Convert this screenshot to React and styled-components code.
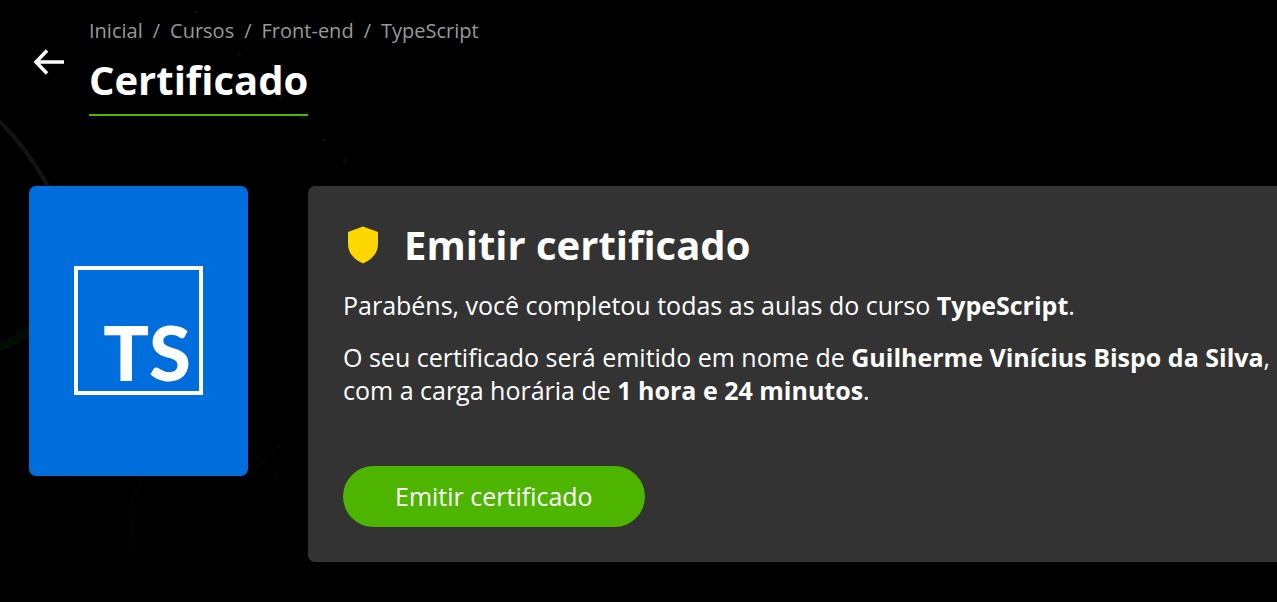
import React from 'react';
import styled, { createGlobalStyle } from 'styled-components';

const GlobalStyle = createGlobalStyle`
  *, *::before, *::after { box-sizing: border-box; }
  body {
    margin: 0;
    background: #000;
    color: #fff;
    font-family: "Open Sans", sans-serif;
  }
  h1, h2, p, ol { margin: 0; padding: 0; }
`;

const Page = styled.div`
  position: relative;
  min-height: 100vh;
  overflow: hidden;
`;

const Backdrop = styled.svg`
  position: absolute;
  top: 0;
  left: 0;
  z-index: -1;
  pointer-events: none;
`;

const Header = styled.header`
  display: flex;
  align-items: flex-start;
  gap: 24px;
  padding: 16px 32px 0;
`;

const BackLink = styled.a`
  display: flex;
  padding-top: 32px;
  color: #fff;
`;

const Crumbs = styled.ol`
  display: flex;
  list-style: none;
  font-size: 20px;
  line-height: 30px;
  color: #999;
`;

const Crumb = styled.li`
  & + &::before {
    content: "/";
    margin: 0 10px;
  }
`;

const CrumbLink = styled.a`
  color: inherit;
  text-decoration: none;
`;

const Title = styled.h1`
  width: fit-content;
  border-bottom: 2px solid #4db500;
  font-size: 40px;
  line-height: 68px;
  font-weight: 700;
`;

const Content = styled.main`
  display: flex;
  align-items: flex-start;
  gap: 60px;
  padding: 70px 0 40px 29px;
`;

const CourseCover = styled.div`
  flex: none;
  display: flex;
  align-items: center;
  justify-content: center;
  width: 219px;
  height: 290px;
  padding-bottom: 2px;
  border-radius: 7px;
  background: #006ddd;
`;

const CourseLogo = styled.div`
  display: flex;
  align-items: flex-end;
  justify-content: flex-end;
  width: 129px;
  height: 129px;
  padding: 0 8px 1px;
  border: 4px solid #fff;
  font-family: Lato, sans-serif;
  font-size: 76px;
  line-height: 76px;
  font-weight: 900;
`;

const Card = styled.section`
  flex: 1;
  min-width: 0;
  padding: 35px 0 35px 35px;
  border-radius: 7px 0 0 7px;
  background: #333;
`;

const CardHeader = styled.div`
  display: flex;
  align-items: center;
  gap: 25px;
  margin-bottom: 20px;
  padding-left: 4px;
`;

const CardTitle = styled.h2`
  font-size: 40px;
  line-height: 48px;
  font-weight: 700;
`;

const Text = styled.p`
  margin-bottom: 19px;
  font-size: 25px;
  line-height: 33px;
`;

const IssueButton = styled.button`
  display: block;
  margin-top: 59px;
  padding: 14px 52px;
  border: 0;
  border-radius: 32px;
  background: #4db500;
  color: #fff;
  font: inherit;
  font-size: 25px;
  line-height: 33px;
  cursor: pointer;
`;

const crumbs = ['Inicial', 'Cursos', 'Front-end', 'TypeScript'];

const dots = [[196, 12], [239, 54], [281, 97], [302, 118], [324, 140], [345, 161]];

function BackgroundArt() {
  return (
    <Backdrop width="400" height="602" viewBox="0 0 400 602" fill="none" aria-hidden="true">
      <path d="M-4 118Q26 146 49 188" stroke="#131313" strokeWidth="4" />
      <path d="M-4 348Q16 342 32 328" stroke="#020c02" strokeWidth="9" />
      <path d="M66 474Q70 520 79 557" stroke="#020202" strokeWidth="3" />
      <path d="M142 474Q125 515 134 557" stroke="#010201" strokeWidth="8" />
      <path d="M247 445L279 478M279 445L247 478" stroke="#050403" strokeWidth="3" />
      {dots.map(([x, y]) => (
        <circle key={x} cx={x} cy={y} r="2" fill="#0c0c0c" />
      ))}
    </Backdrop>
  );
}

export default function App() {
  return (
    <Page>
      <GlobalStyle />
      <BackgroundArt />
      <Header>
        <BackLink href="#" aria-label="Voltar">
          <svg width="33" height="28" viewBox="0 0 33 28" fill="none" stroke="currentColor" strokeWidth="3.500">
            <path d="M32 14H4M15 2.500L4 14L15 25.500" />
          </svg>
        </BackLink>
        <div>
          <nav aria-label="Trilha">
            <Crumbs>
              {crumbs.map((name) => (
                <Crumb key={name}>
                  <CrumbLink href="#">{name}</CrumbLink>
                </Crumb>
              ))}
            </Crumbs>
          </nav>
          <Title>Certificado</Title>
        </div>
      </Header>
      <Content>
        <CourseCover>
          <CourseLogo>TS</CourseLogo>
        </CourseCover>
        <Card>
          <CardHeader>
            <svg width="32" height="38" viewBox="0 0 32 38" fill="#ffd700" aria-hidden="true">
              <path d="M16 0.500L31 6V18C31 27 25 33.500 16 37.500C7 33.500 1 27 1 18V6Z" />
            </svg>
            <CardTitle>Emitir certificado</CardTitle>
          </CardHeader>
          <Text>
            Parabéns, você completou todas as aulas do curso <strong>TypeScript</strong>.
          </Text>
          <Text>
            O seu certificado será emitido em nome de <strong>Guilherme Vinícius Bispo da Silva</strong>, com a
            carga horária de <strong>1 hora e 24 minutos</strong>.
          </Text>
          <IssueButton type="button">Emitir certificado</IssueButton>
        </Card>
      </Content>
    </Page>
  );
}
